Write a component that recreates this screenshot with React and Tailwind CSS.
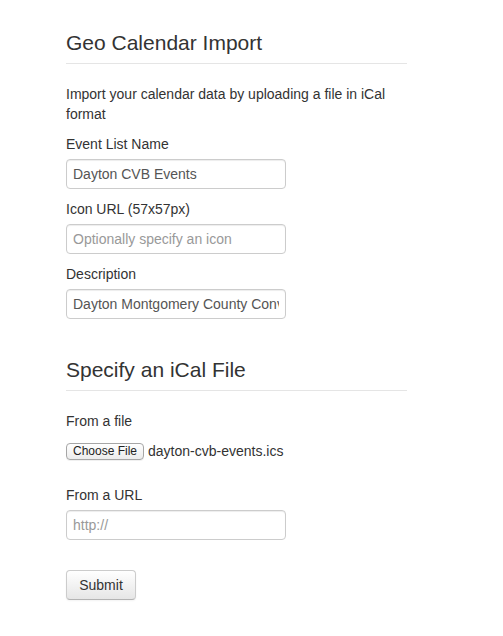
import React from 'react';

const inputClass =
  "block w-[220px] h-[30px] px-[6px] py-1 mb-[10px] text-[14px] leading-5 text-[#555] bg-white border border-[#ccc] rounded-[4px] shadow-[inset_0_1px_1px_rgba(0,0,0,0.075)] placeholder:text-[#999] focus:outline-none";

function Field({ label, value, placeholder }) {
  return (
    <div>
      <label className="block mb-[5px] leading-5">{label}</label>
      <input type="text" defaultValue={value} placeholder={placeholder} className={inputClass} />
    </div>
  );
}

export default function App() {
  return (
    <div className="min-h-[636px] bg-white text-[#333] text-[14px] leading-5 font-['Liberation_Sans',Arial,sans-serif]">
      <form className="w-[341px] ml-[66px] pt-[23px]" onSubmit={(e) => e.preventDefault()}>
        {/* Event list details */}
        <fieldset>
          <legend className="block w-full text-[21px] leading-10 text-[#333] border-b border-[#e5e5e5] mb-5">
            Geo Calendar Import
          </legend>
          <p className="mb-[10px]">Import your calendar data by uploading a file in iCal format</p>
          <Field label="Event List Name" value="Dayton CVB Events" />
          <Field label="Icon URL (57x57px)" placeholder="Optionally specify an icon" />
          <Field label="Description" value="Dayton Montgomery County Convention & Visitors Bureau" />
        </fieldset>

        {/* iCal source */}
        <fieldset className="mt-[21px]">
          <legend className="block w-full text-[21px] leading-10 text-[#333] border-b border-[#e5e5e5] mb-5">
            Specify an iCal File
          </legend>
          <label className="block mb-[5px] leading-5">From a file</label>
          <div className="flex items-center h-[30px] mb-[19px]">
            <button
              type="button"
              className="h-[17px] px-[6px] text-[12px] leading-[15px] text-[#222] rounded-[4px] border border-[#a6a6a6] bg-gradient-to-b from-white to-[#ececec] shadow-[0_1px_0_rgba(0,0,0,0.06)]"
            >
              Choose File
            </button>
            <span className="ml-[4px] text-[14px]">dayton-cvb-events.ics</span>
          </div>
          <Field label="From a URL" placeholder="http://" />
        </fieldset>

        <button
          type="submit"
          className="mt-5 h-[30px] w-[70px] text-[14px] leading-5 text-[#333] rounded-[4px] border border-[#ccc] border-b-[#b3b3b3] bg-gradient-to-b from-white to-[#e6e6e6] shadow-[inset_0_1px_0_rgba(255,255,255,0.2),0_1px_2px_rgba(0,0,0,0.05)]"
        >
          Submit
        </button>
      </form>
    </div>
  );
}
